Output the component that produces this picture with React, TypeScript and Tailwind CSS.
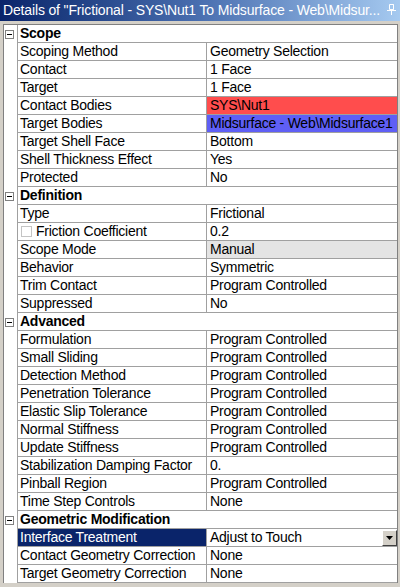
type Row = {
  name: string;
  value: string;
  kind?: "red" | "blue" | "gray" | "select" | "check";
};

type Section = { title: string; rows: Row[] };

const SECTIONS: Section[] = [
  {
    title: "Scope",
    rows: [
      { name: "Scoping Method", value: "Geometry Selection" },
      { name: "Contact", value: "1 Face" },
      { name: "Target", value: "1 Face" },
      { name: "Contact Bodies", value: "SYS\\Nut1", kind: "red" },
      { name: "Target Bodies", value: "Midsurface - Web\\Midsurface1", kind: "blue" },
      { name: "Target Shell Face", value: "Bottom" },
      { name: "Shell Thickness Effect", value: "Yes" },
      { name: "Protected", value: "No" },
    ],
  },
  {
    title: "Definition",
    rows: [
      { name: "Type", value: "Frictional" },
      { name: "Friction Coefficient", value: "0.2", kind: "check" },
      { name: "Scope Mode", value: "Manual", kind: "gray" },
      { name: "Behavior", value: "Symmetric" },
      { name: "Trim Contact", value: "Program Controlled" },
      { name: "Suppressed", value: "No" },
    ],
  },
  {
    title: "Advanced",
    rows: [
      { name: "Formulation", value: "Program Controlled" },
      { name: "Small Sliding", value: "Program Controlled" },
      { name: "Detection Method", value: "Program Controlled" },
      { name: "Penetration Tolerance", value: "Program Controlled" },
      { name: "Elastic Slip Tolerance", value: "Program Controlled" },
      { name: "Normal Stiffness", value: "Program Controlled" },
      { name: "Update Stiffness", value: "Program Controlled" },
      { name: "Stabilization Damping Factor", value: "0." },
      { name: "Pinball Region", value: "Program Controlled" },
      { name: "Time Step Controls", value: "None" },
    ],
  },
  {
    title: "Geometric Modification",
    rows: [
      { name: "Interface Treatment", value: "Adjust to Touch", kind: "select" },
      { name: "Contact Geometry Correction", value: "None" },
      { name: "Target Geometry Correction", value: "None" },
    ],
  },
];

function MinusBox() {
  return (
    <div className="ml-[1px] flex h-[9px] w-[9px] items-center justify-center border border-[#808080] bg-white">
      <div className="h-[1px] w-[5px] bg-black" />
    </div>
  );
}

function PropRow({ row }: { row: Row }) {
  const valueBg =
    row.kind === "red"
      ? "bg-[#ff4d4d]"
      : row.kind === "blue"
      ? "bg-[#5f5ff5]"
      : row.kind === "gray"
      ? "bg-[#e4e4e4]"
      : "bg-white";
  const selected = row.kind === "select";

  return (
    <div className="flex h-[18px]">
      <div className="w-[14px] border-r border-[#a0a0a0] bg-white" />
      <div
        className={`flex w-[189px] items-center gap-[4px] overflow-hidden whitespace-nowrap border-r border-b border-[#a0a0a0] pl-[2px] ${
          selected ? "bg-[#0a246a] text-white" : "bg-white text-black"
        }`}
      >
        {row.kind === "check" && (
          <div className="ml-[1px] h-[11px] w-[11px] border border-[#c4c4c4] bg-white" />
        )}
        <span>{row.name}</span>
      </div>
      <div
        className={`flex flex-1 items-center justify-between overflow-hidden whitespace-nowrap border-b border-[#a0a0a0] pl-[3px] text-black ${valueBg}`}
      >
        <span>{row.value}</span>
        {selected && (
          <div className="flex h-[16px] w-[15px] items-center justify-center border-t border-l border-t-white border-l-white border-r border-b border-r-[#404040] border-b-[#404040] bg-[#d4d0c8]">
            <svg width="7" height="4" viewBox="0 0 7 4">
              <path d="M0 0h7L3.5 4z" fill="#000" />
            </svg>
          </div>
        )}
      </div>
    </div>
  );
}

function HeaderRow({ title }: { title: string }) {
  return (
    <div className="flex h-[18px]">
      <div className="flex w-[14px] items-center border-r border-[#a0a0a0] bg-white">
        <MinusBox />
      </div>
      <div className="flex flex-1 items-center border-b border-[#a0a0a0] bg-white pl-[2px] font-bold text-black">
        {title}
      </div>
    </div>
  );
}

export default function App() {
  return (
    <div
      className="flex h-[587px] w-[400px] flex-col overflow-hidden bg-[#d4d0c8] text-[14px] leading-[17px] tracking-[-0.25px]"
      style={{ fontFamily: '"Liberation Sans", Arial, sans-serif' }}
    >
      <div className="flex h-[21px] items-center justify-between bg-gradient-to-r from-[#0a246a] via-[#4a6fb0] to-[#a6caf0] pl-[3px] pr-[4px] text-white">
        <span className="whitespace-nowrap tracking-[-0.15px]">
          Details of "Frictional - SYS\Nut1 To Midsurface - Web\Midsur...
        </span>
        <svg width="9" height="11" viewBox="0 0 9 11" className="mb-[2px]">
          <path d="M2.5 0.5h4v5h-4z M6.5 0.5v5" fill="none" stroke="#fff" strokeWidth="1" />
          <path d="M0 6.5h9 M4.5 6.5v4.5" stroke="#fff" strokeWidth="1" />
        </svg>
      </div>
      <div className="h-[3px]" />
      <div className="ml-[3px] w-[395px] border-t border-l border-r border-[#808080]">
        {SECTIONS.map((s) => (
          <div key={s.title}>
            <HeaderRow title={s.title} />
            {s.rows.map((r) => (
              <PropRow key={r.name} row={r} />
            ))}
          </div>
        ))}
      </div>
    </div>
  );
}
